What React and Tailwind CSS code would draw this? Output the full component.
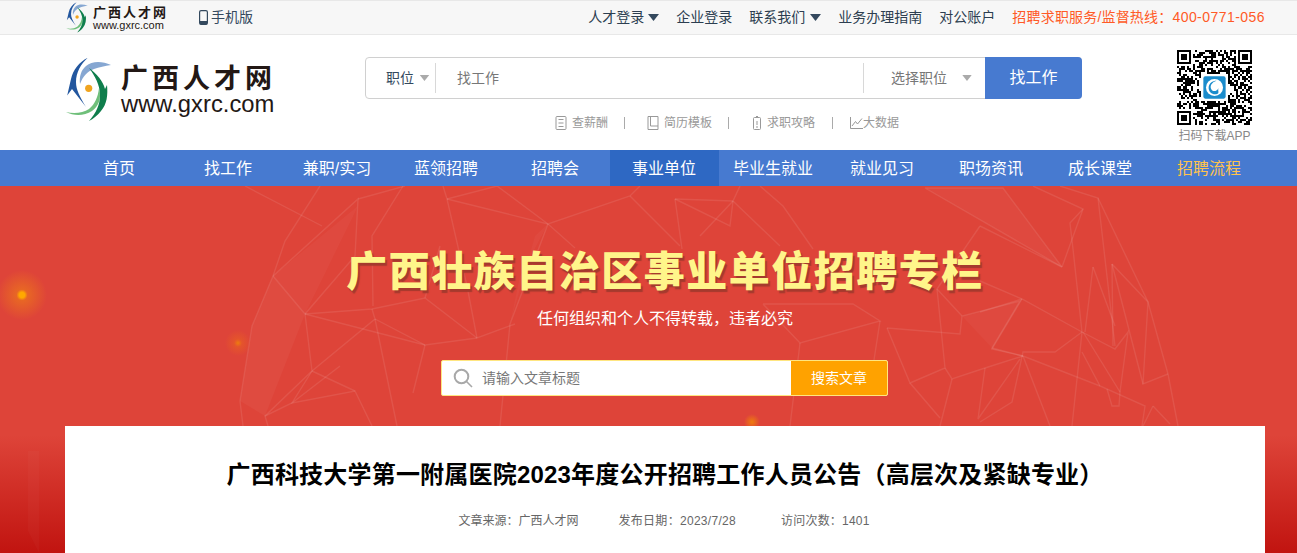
import React from "react";

const LINES = [
  "320,0 285,55 273,90 252,140 240,215 243,240",
  "273,90 305,128 312,185 265,230 268,240",
  "273,90 358,13 355,70 305,128",
  "358,13 405,0",
  "245,0 322,40",
  "305,128 372,123 425,112 477,152 515,138",
  "372,123 375,133 312,185",
  "375,133 425,159 477,152",
  "425,159 413,207",
  "375,133 397,240",
  "305,128 425,159",
  "312,185 292,217 355,205 372,240",
  "312,185 355,205",
  "265,230 292,217 340,180",
  "403,0 372,50 373,120",
  "443,0 447,13 467,100 477,152",
  "447,13 548,38",
  "447,13 497,0 548,38 630,10 640,0",
  "548,38 510,138 500,240",
  "548,38 575,62",
  "630,10 680,60",
  "425,112 440,60",
  "675,13 730,40 733,15 740,0",
  "675,13 682,63",
  "675,13 733,15",
  "733,15 700,50",
  "733,15 780,60",
  "760,0 783,20 813,63",
  "763,118 800,157 880,135 853,118 763,118",
  "800,157 790,240",
  "887,142 960,148 962,130 1020,115 992,162 1023,170",
  "887,142 910,197 945,182 937,103",
  "945,182 952,193 985,182 1023,170",
  "952,193 940,240",
  "985,182 978,233 1020,173",
  "910,197 940,232",
  "880,135 870,200",
  "962,130 937,103 980,40",
  "925,2 1003,2 1062,81 925,2",
  "1033,0 1083,23 1070,37 1073,63 1082,146 1072,240",
  "1083,23 1062,81",
  "980,40 1062,81",
  "1098,12 1148,116 1168,188 1178,240",
  "1060,0 1098,12 1115,160",
  "1093,81 1115,140",
  "1093,81 1085,146",
  "1112,78 1148,116 1143,198 1168,188",
  "1112,78 1113,160",
  "1112,78 1143,198",
  "1082,146 1115,163 1128,146 1120,206",
  "1082,146 1055,166 1023,166 1012,216 980,236",
  "1022,113 992,163 1023,170 1100,200",
  "1022,113 980,126",
  "980,95 1022,113 1082,146",
  "1082,166 1100,200 1145,220 1142,240",
  "1153,220 1170,238",
  "1153,220 1143,240",
  "1023,170 1050,240",
  "1083,146 1120,206",
  "1107,203 1112,220 1119,220 1120,206",
];

function Swoosh({ className }) {
  return (
    <svg viewBox="0 0 45 65" className={className}>
      <path d="M21.7 0.7C13 5 7 13 5 22L1.2 38.5 6 32 20 50C14 40 10 33 10 25 10 15 15 7 21.7 0.7Z" fill="#22569e" />
      <path d="M45 8C36 4 26 4 20 9 15 13 13 20 14 27 17 19 22 14 28 12 33 10 39 9 45 8Z" fill="#86a7d2" />
      <path d="M0 55C8 57 17 56 23 52 29 47 32 40 33 31 36 42 32 50 26 54 18 59 8 59 0 55Z" fill="#6fbf7a" />
      <path d="M23 11C31 17 37 24 39 32L41 28C42 38 41 47 35 54 32 58 27 62 23 64 30 56 34 48 34 38 34 28 29 19 23 11Z" fill="#0f7e4c" />
      <circle cx="22.7" cy="31.3" r="3.6" fill="#f0a41f" />
    </svg>
  );
}

function Caret({ className, fill }) {
  return (
    <svg viewBox="0 0 11 7" className={className}>
      <polygon points="0,0 11,0 5.5,7" fill={fill} />
    </svg>
  );
}

function buildQr() {
  const n = 37;
  const cells = [];
  let seed = 20230728;
  const rnd = () => {
    seed = (seed * 1664525 + 1013904223) >>> 0;
    return seed / 4294967296;
  };
  const inBox = (x, y, a, b, s) => x >= a && x < a + s && y >= b && y < b + s;
  for (let y = 0; y < n; y++) {
    for (let x = 0; x < n; x++) {
      if (inBox(x, y, 0, 0, 8) || inBox(x, y, n - 8, 0, 8) || inBox(x, y, 0, n - 8, 8)) continue;
      if (inBox(x, y, n - 9, n - 9, 5)) continue;
      if (rnd() < 0.52) cells.push([x, y]);
    }
  }
  return cells;
}
const QR = buildQr();

function Finder({ x, y, s = 7 }) {
  return (
    <g>
      <rect x={x} y={y} width={s} height={s} fill="#000" />
      <rect x={x + 1} y={y + 1} width={s - 2} height={s - 2} fill="#fff" />
      <rect x={x + 2} y={y + 2} width={s - 4} height={s - 4} fill="#000" />
    </g>
  );
}

function QrCode() {
  return (
    <svg viewBox="0 0 37 37" className="block w-[75px] h-[75px]" shapeRendering="crispEdges">
      <rect width="37" height="37" fill="#fff" />
      {QR.map(([x, y]) => (
        <rect key={x + "-" + y} x={x} y={y} width="1" height="1" fill="#000" />
      ))}
      <Finder x={0} y={0} />
      <Finder x={30} y={0} />
      <Finder x={0} y={30} />
      <Finder x={28} y={28} s={5} />
      <rect x="12" y="12" width="13" height="13" fill="#fff" />
      <g shapeRendering="auto">
        <rect x="13" y="13" width="11" height="11" rx="1" fill="#1b8ccc" />
        <circle cx="18.5" cy="18.5" r="4.2" fill="#fff" />
        <path d="M19.5 15.2C17 16 16 18 17 19.5 18 21 20 20 20.5 18.7 20 20 21 21 20 21.6 18 22.5 15.5 21 15.6 18.5 15.7 16.5 17.5 15.2 19.5 15.2Z" fill="#1b8ccc" />
      </g>
    </svg>
  );
}

const NAV = ["首页", "找工作", "兼职/实习", "蓝领招聘", "招聘会", "事业单位", "毕业生就业", "就业见习", "职场资讯", "成长课堂", "招聘流程"];

function SubLink({ icon, label, gap }) {
  return (
    <span className="flex items-center text-[12px] text-[#999]">
      {icon}
      <span className={gap}>{label}</span>
    </span>
  );
}

export default function App() {
  return (
    <div className="flex flex-col h-[553px] w-full overflow-hidden bg-white font-['Liberation_Sans','Noto_Sans_CJK_SC',sans-serif]">
      <div className="h-[35px] shrink-0 bg-[#f7f7f7] border-t border-b border-[#e8e8e8]">
        <div className="ml-[65px] w-[1200px] h-full flex items-center justify-between">
          <div className="flex items-center">
            <Swoosh className="w-[22px] h-[31px] ml-[1px]" />
            <div className="ml-[5px] w-[74px] flex flex-col text-[#231815]">
              <span className="text-[13px] leading-[14px] font-bold tracking-[2px] whitespace-nowrap font-['Noto_Sans_CJK_SC',sans-serif]">广西人才网</span>
              <span className="text-[11px] leading-[12px] whitespace-nowrap">www.gxrc.com</span>
            </div>
            <svg viewBox="0 0 9 15" className="w-[9px] h-[15px] ml-[32px]">
              <rect x="0.6" y="0.6" width="7.8" height="13.8" rx="1.5" fill="none" stroke="#34495e" strokeWidth="1.2" />
              <rect x="1" y="11" width="7" height="3.4" fill="#34495e" />
            </svg>
            <span className="ml-[3px] text-[14px] text-[#34495e]">手机版</span>
          </div>
          <div className="flex items-center gap-[17px] text-[14px] text-[#2c3e50] whitespace-nowrap">
            <span className="flex items-center">
              人才登录
              <Caret className="w-[11px] h-[7px] ml-[4px]" fill="#34495e" />
            </span>
            <span>企业登录</span>
            <span className="flex items-center">
              联系我们
              <Caret className="w-[11px] h-[7px] ml-[5px]" fill="#34495e" />
            </span>
            <span>业务办理指南</span>
            <span>对公账户</span>
            <span className="text-[#ff5a26]">
              <span className="tracking-[0.18px]">招聘求职服务/监督热线：</span>
              <span className="tracking-[0.45px]">400-0771-056</span>
            </span>
          </div>
        </div>
      </div>

      <div className="h-[115px] shrink-0">
        <div className="ml-[65px] w-[1200px] flex items-start">
          <div className="w-[300px] mt-[22px] flex items-start">
            <Swoosh className="w-[45px] h-[65px] ml-[1px]" />
            <div className="ml-[10px] flex flex-col text-[#231815]">
              <span className="mt-[4px] text-[27px] leading-[31px] font-bold tracking-[4px] whitespace-nowrap font-['Noto_Sans_CJK_SC',sans-serif]">广西人才网</span>
              <span className="text-[23.8px] leading-[24px] whitespace-nowrap">www.gxrc.com</span>
            </div>
          </div>
          <div className="w-[717px] mt-[22px] flex flex-col">
            <div className="h-[42px] flex items-stretch border border-[#d0d0d0] rounded-[4px] bg-white">
              <div className="flex items-center pl-[20px] w-[69px] shrink-0">
                <span className="text-[14px] text-[#34495e]">职位</span>
                <Caret className="w-[11px] h-[6px] ml-[5px]" fill="#aaa" />
              </div>
              <div className="w-px bg-[#d8d8d8] my-[5px] shrink-0" />
              <div className="flex-1 flex items-center pl-[21px] text-[14px] text-[#777]">找工作</div>
              <div className="w-px bg-[#d8d8d8] my-[5px] shrink-0" />
              <div className="w-[121px] shrink-0 flex items-center pl-[27px] text-[14px] text-[#777]">
                选择职位
                <Caret className="w-[10px] h-[6px] ml-[15px]" fill="#aaa" />
              </div>
              <button className="w-[97px] shrink-0 -my-px -mr-px rounded-r-[4px] bg-[#477ad0] text-white text-[16px]">找工作</button>
            </div>
            <div className="mt-[15px] h-[17px] flex items-center pl-[190px]">
              <SubLink
                gap="ml-[5px]"
                label="查薪酬"
                icon={
                  <svg viewBox="0 0 12 14" className="w-[12px] h-[14px]" fill="none" stroke="#999">
                    <rect x="1" y="0.5" width="10" height="13" rx="1" />
                    <path d="M3.5 3.5H8.5M3.5 7H8.5M3.5 10.5H8.5" />
                  </svg>
                }
              />
              <span className="ml-[16px] w-px h-[12px] bg-[#aaa]" />
              <span className="ml-[22px]">
                <SubLink
                  gap="ml-[5px]"
                  label="简历模板"
                  icon={
                    <svg viewBox="0 0 12 14" className="w-[12px] h-[14px]" fill="none" stroke="#999">
                      <path d="M1 0.5H11V13.5H1ZM3.5 0.5V10H11" />
                    </svg>
                  }
                />
              </span>
              <span className="ml-[16px] w-px h-[12px] bg-[#aaa]" />
              <span className="ml-[23px]">
                <SubLink
                  gap="ml-[5px]"
                  label="求职攻略"
                  icon={
                    <svg viewBox="0 0 10 14" className="w-[10px] h-[14px]" fill="none" stroke="#999">
                      <rect x="1.5" y="1.5" width="7" height="12" rx="1" />
                      <path d="M4 0.5H6M5 5V9M4 11H6" />
                    </svg>
                  }
                />
              </span>
              <span className="ml-[17px] w-px h-[12px] bg-[#aaa]" />
              <span className="ml-[17px]">
                <SubLink
                  gap="ml-0"
                  label="大数据"
                  icon={
                    <svg viewBox="0 0 13 12" className="w-[13px] h-[12px]" fill="none" stroke="#999">
                      <path d="M0.5 0V11.5H13M2 9L5.5 4.5 7.5 7 12 1.5" />
                    </svg>
                  }
                />
              </span>
            </div>
          </div>
          <div className="ml-[95px] mt-[15px] w-[75px] flex flex-col items-center">
            <QrCode />
            <span className="mt-[2px] text-[12px] leading-[18px] text-[#888] whitespace-nowrap">扫码下载APP</span>
          </div>
        </div>
      </div>

      <div className="h-[36px] shrink-0 bg-[#477ad0]">
        <div className="ml-[65px] w-[1200px] h-full flex">
          {NAV.map((n) => (
            <div
              key={n}
              className={
                "w-[109px] shrink-0 pr-px pt-px flex items-center justify-center text-[16px] whitespace-nowrap " +
                (n === "事业单位" ? "bg-[#2e68c3] text-white" : n === "招聘流程" ? "text-[#ffc34d]" : "text-white")
              }
            >
              {n}
            </div>
          ))}
        </div>
      </div>

      <div className="relative flex-1 flex flex-col overflow-hidden bg-[linear-gradient(180deg,#de4439_0%,#de4439_68%,#c11410_100%)]">
        <svg viewBox="0 0 1297 367" className="absolute left-0 top-0 w-[1297px] h-[367px]" fill="none">
          <polygon points="240,215 252,140 273,90 305,128 265,230" fill="#fff" fillOpacity="0.04" />
          <polygon points="273,90 358,20 305,128" fill="#fff" fillOpacity="0.03" />
          <polygon points="510,138 535,50 548,38 520,90" fill="#fff" fillOpacity="0.03" />
          <polygon points="925,2 1003,2 1062,81" fill="#fff" fillOpacity="0.03" />
          <polygon points="962,130 1020,115 992,162" fill="#fff" fillOpacity="0.03" />
          <polygon points="28,265 39,265 39,367 28,345" fill="#fff" fillOpacity="0.025" />
          {LINES.map((p) => (
            <polyline key={p} points={p} stroke="#fff" strokeOpacity="0.09" strokeWidth="1.4" />
          ))}
        </svg>
        <span className="absolute left-[-3px] top-[84px] w-[50px] h-[50px] rounded-full bg-[radial-gradient(circle_closest-side,#ffa800_0%,#ffa800_11%,rgba(240,130,20,0.55)_22%,rgba(222,68,57,0)_100%)]" />
        <span className="absolute left-[225px] top-[144px] w-[26px] h-[26px] rounded-full bg-[radial-gradient(circle_closest-side,rgba(240,130,10,0.9)_0%,rgba(235,100,30,0.5)_30%,rgba(222,68,57,0)_100%)]" />
        <span className="absolute left-[744px] top-[228px] w-[16px] h-[16px] rounded-full bg-[radial-gradient(circle_closest-side,rgba(240,130,10,0.9)_0%,rgba(222,68,57,0)_100%)]" />

        <div className="relative ml-[65px] w-[1200px] flex-1 flex flex-col items-center">
          <h1 className="mt-[54px] h-[56px] leading-[56px] text-[41px] tracking-[1.5px] font-black text-[#fff58a] whitespace-nowrap [text-shadow:2px_3px_1px_#a53a2e] font-['Noto_Sans_CJK_SC',sans-serif]">
            广西壮族自治区事业单位招聘专栏
          </h1>
          <p className="mt-[11px] h-[24px] leading-[24px] text-[16px] text-white">任何组织和个人不得转载，违者必究</p>
          <div className="mt-[29px] mr-[1px] w-[447px] h-[36px] shrink-0 flex border border-[#ffe680] rounded-[2px] bg-white overflow-hidden">
            <div className="flex-1 flex items-center pl-[11px] text-[14px] text-[#777]">
              <svg viewBox="0 0 20 20" className="w-[20px] h-[20px]" fill="none" stroke="#a8a8a8">
                <circle cx="8.5" cy="8.5" r="6.8" strokeWidth="2" />
                <path d="M13.5 13.5L19 19" strokeWidth="1.6" />
              </svg>
              <span className="ml-[9px]">请输入文章标题</span>
            </div>
            <button className="w-[96px] shrink-0 bg-[#ffa200] text-white text-[14px]">搜索文章</button>
          </div>
          <div className="mt-[30px] w-full flex-1 bg-white flex flex-col items-center">
            <h2 className="mt-[32px] h-[34px] leading-[34px] text-[24px] font-bold tracking-[0.2px] text-black whitespace-nowrap">
              广西科技大学第一附属医院2023年度公开招聘工作人员公告（高层次及紧缺专业）
            </h2>
            <div className="mt-[19px] mr-[2px] flex text-[12px] leading-[20px] text-[#666] whitespace-nowrap">
              <span>文章来源：广西人才网</span>
              <span className="ml-[40px] tracking-[0.3px]">发布日期：2023/7/28</span>
              <span className="ml-[45px] tracking-[0.2px]">访问次数：1401</span>
            </div>
          </div>
        </div>
      </div>
    </div>
  );
}
